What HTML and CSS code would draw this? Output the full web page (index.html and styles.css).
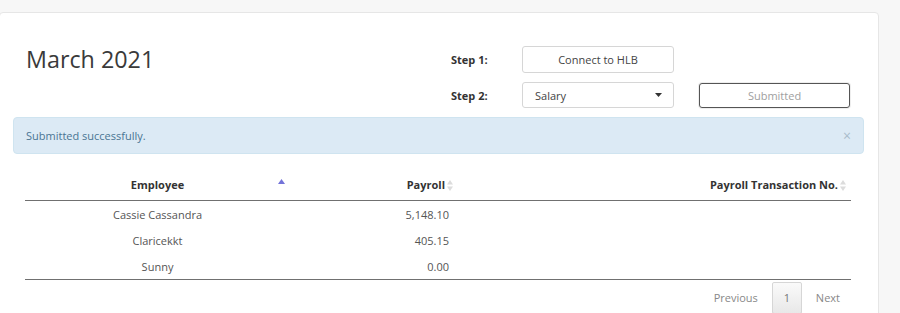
FILE: index.html
```html
<!DOCTYPE html>
<html>
<head>
<meta charset="utf-8">
<link rel="stylesheet" href="styles.css">
</head>
<body>
<div class="card">
  <div class="top">
    <h1 class="title">March 2021</h1>
    <div class="steps">
      <div class="step-label">Step 1:</div>
      <button class="btn">Connect to HLB</button>
      <div></div>
      <div class="step-label">Step 2:</div>
      <div class="select"><span>Salary</span><svg class="caret" width="7" height="4" viewBox="0 0 7 4"><path d="M0 0H7L3.5 4Z" fill="#333"/></svg></div>
      <button class="btn btn-submitted">Submitted</button>
    </div>
  </div>
  <div class="alert">
    <span>Submitted successfully.</span>
    <span class="close">×</span>
  </div>
  <table class="grid">
    <colgroup><col class="c1"><col class="c2"><col class="c3"></colgroup>
    <thead>
      <tr>
        <th class="th-center">Employee<svg class="sort-asc" width="7" height="5" viewBox="0 0 7 5"><path d="M0 5L3.5 0L7 5Z" fill="#7373d9"/></svg></th>
        <th class="th-right">Payroll<svg class="sort-both" width="6" height="11" viewBox="0 0 6 11"><path d="M0 4.5L3 0L6 4.5Z M0 6.5L3 11L6 6.5Z" fill="#dcdcdc"/></svg></th>
        <th class="th-right th-last">Payroll Transaction No.<svg class="sort-both" width="6" height="11" viewBox="0 0 6 11"><path d="M0 4.5L3 0L6 4.5Z M0 6.5L3 11L6 6.5Z" fill="#dcdcdc"/></svg></th>
      </tr>
    </thead>
    <tbody>
      <tr><td class="center">Cassie Cassandra</td><td class="num">5,148.10</td><td></td></tr>
      <tr><td class="center">Claricekkt</td><td class="num">405.15</td><td></td></tr>
      <tr><td class="center">Sunny</td><td class="num">0.00</td><td></td></tr>
    </tbody>
  </table>
  <div class="pager">
    <span class="pg">Previous</span>
    <span class="pg pg-current">1</span>
    <span class="pg">Next</span>
  </div>
</div>
</body>
</html>
```
FILE: styles.css
```css
html, body {
  margin: 0;
  padding: 0;
  background: #f7f7f7;
  font-family: "Open Sans", "Liberation Sans", sans-serif;
  font-size: 11px;
  color: #555;
  overflow: hidden;
}
.card {
  margin: 12px 21px 0 -1px;
  background: #fff;
  border: 1px solid #e6e6e6;
  border-radius: 4px;
  height: 320px;
  box-sizing: border-box;
}
.top {
  display: flex;
  align-items: flex-start;
  padding: 33px 0 0 26px;
}
.title {
  width: 425px;
  margin: 0;
  font-size: 23.3px;
  font-weight: 400;
  line-height: 27px;
  color: #3a3a3a;
}
.steps {
  display: grid;
  grid-template-columns: 71px 152px 176px;
  grid-template-rows: 27px 26px;
  row-gap: 9px;
  align-items: center;
}
.step-label {
  font-weight: 700;
  color: #333;
}
.btn {
  font-family: inherit;
  font-size: 11px;
  height: 100%;
  background: #fff;
  border: 1px solid #d6d6d6;
  border-radius: 3px;
  color: #444;
  padding: 0;
  box-sizing: border-box;
}
.steps > button.btn-submitted {
  margin-left: 25px;
  width: 151px;
  height: 25px;
  border: 1px solid #555;
  color: #a0a0a0;
  box-shadow: 0 0 0 1px #eee;
}
.select {
  height: 100%;
  box-sizing: border-box;
  border: 1px solid #d6d6d6;
  border-radius: 3px;
  display: flex;
  align-items: center;
  justify-content: space-between;
  padding: 0 11px 0 12px;
  color: #444;
}
.alert {
  margin: 9px 14px 0 13px;
  height: 37px;
  box-sizing: border-box;
  background: #dceaf5;
  border: 1px solid #cfe4f0;
  border-radius: 4px;
  color: #4a7593;
  display: flex;
  align-items: center;
  justify-content: space-between;
  padding: 0 12px 0 12px;
}
.close {
  color: #a9bccb;
  font-size: 14px;
  line-height: 1;
}
.grid {
  margin: 15px 26px 0 25px;
  width: 826px;
  border-collapse: collapse;
  table-layout: fixed;
}
.c1 { width: 265px; }
.c2 { width: 170px; }
.c3 { width: 391px; }
.grid th {
  position: relative;
  height: 31px;
  padding: 0;
  font-weight: 700;
  color: #333;
  border-bottom: 1px solid #707070;
  vertical-align: middle;
}
.th-center { text-align: center; }
.th-right { text-align: right; padding-right: 7px !important; }
.th-last { padding-right: 5px !important; }
.sort-asc {
  position: absolute;
  right: 5px;
  top: 10px;
}
.sort-both {
  margin-left: 2px;
  vertical-align: -2px;
}
.grid td {
  height: 26px;
  padding: 0;
  vertical-align: middle;
}
.grid tbody tr:last-child td {
  border-bottom: 1px solid #707070;
}
.center { text-align: center; }
.num { text-align: right; padding-right: 11px !important; }
.pager {
  display: flex;
  justify-content: flex-end;
  align-items: center;
  margin: 2px 31px 0 0;
}
.pg {
  color: #888;
  padding: 0 7px;
  line-height: 30px;
}
.pg-current {
  margin: 0 7px;
  width: 30px;
  box-sizing: border-box;
  padding: 0;
  text-align: center;
  border: 1px solid #d6d6d6;
  border-radius: 2px;
  background: linear-gradient(#fafafa, #e8e8e8);
  color: #777;
}
```
